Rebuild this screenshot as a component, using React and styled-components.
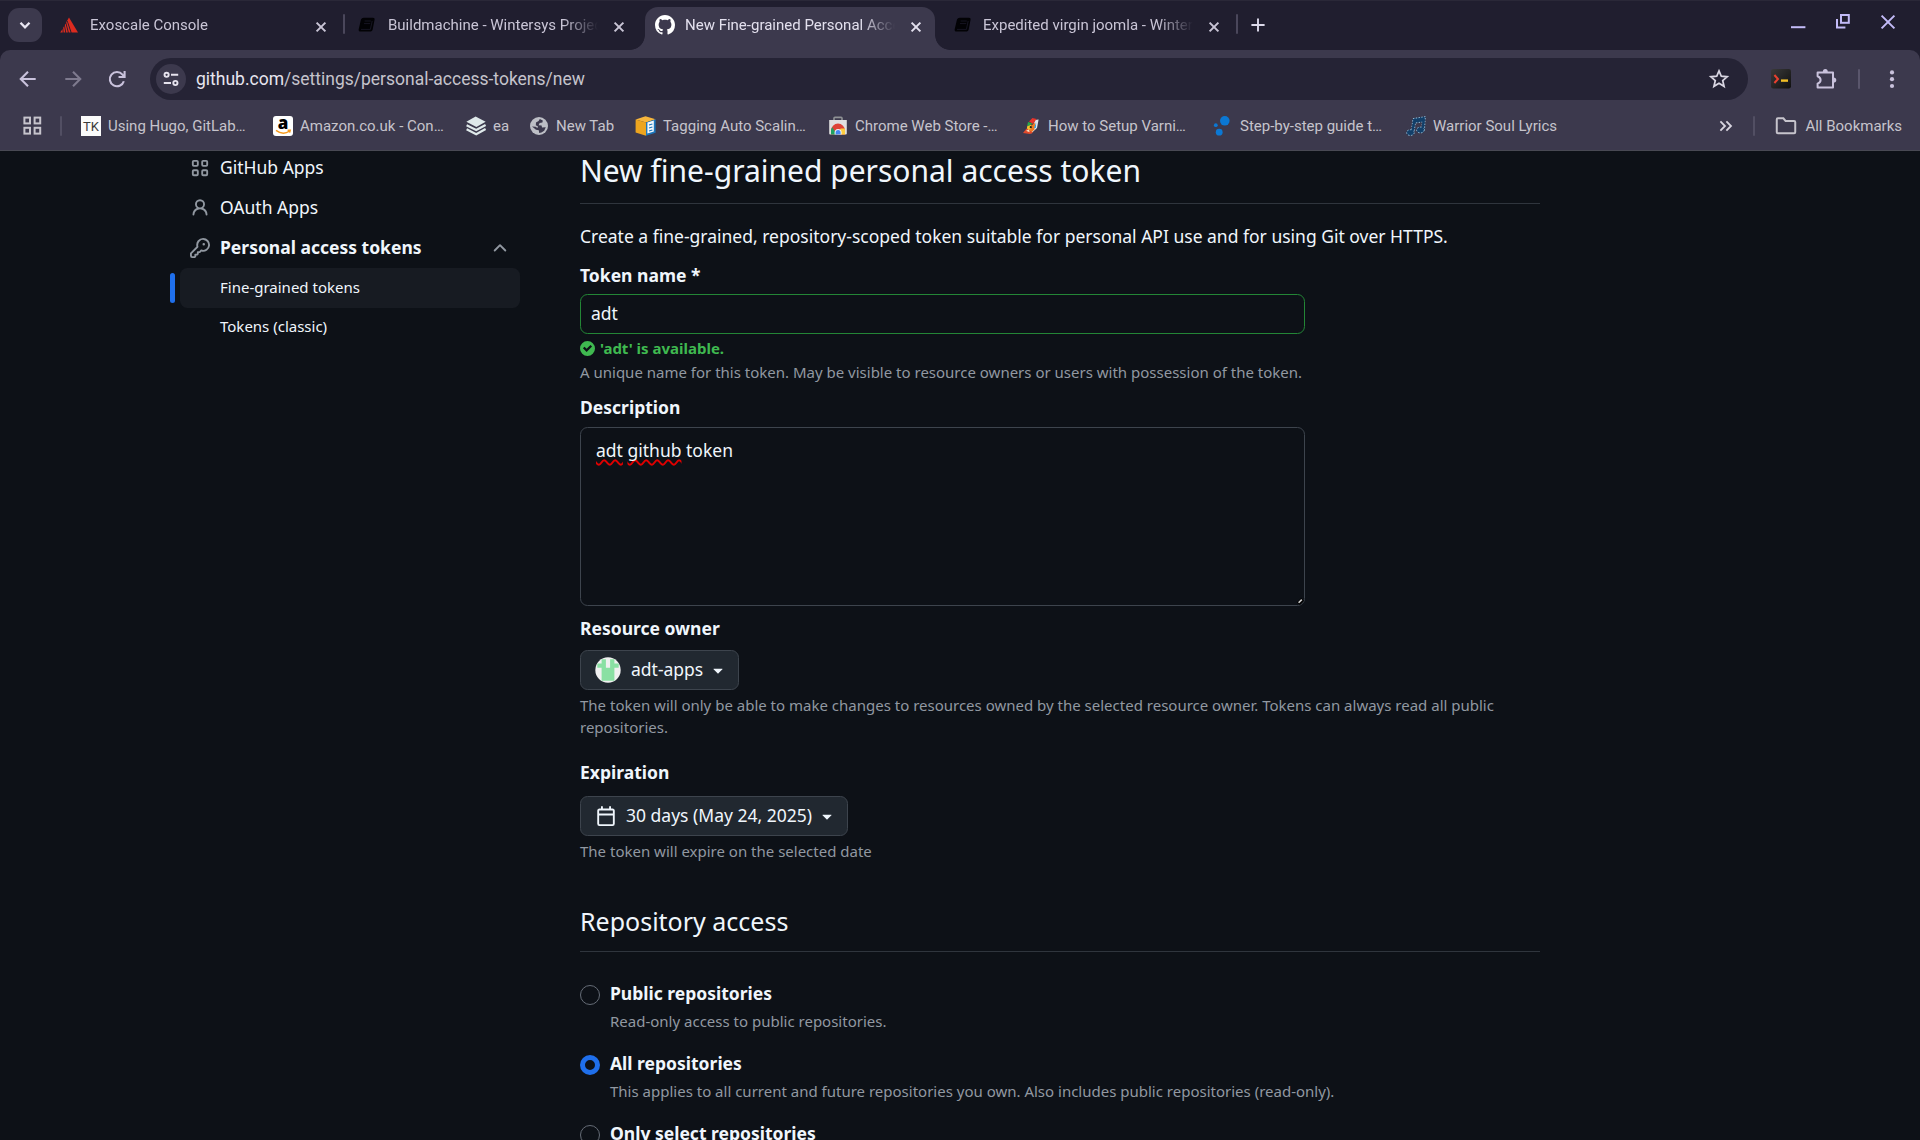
import React from "react";
import styled, { createGlobalStyle, css } from "styled-components";

const color = {
  strip: "#201e2f",
  toolbar: "#3c394d",
  omnibox: "#252335",
  chromeText: "#c9c5d6",
  bookmark: "#c6c4cc",
  lilac: "#c3bbf8",
  page: "#0d1117",
  text: "#f0f6fc",
  muted: "#9198a1",
  border: "#3d444d",
  blue: "#1f6feb",
  green: "#3fb950",
};

const GlobalStyle = createGlobalStyle`
  *, *::before, *::after { box-sizing: border-box; }
  html, body { margin: 0; padding: 0; background: ${color.page}; }
  body { overflow: hidden; }
`;

const Window = styled.div`
  width: 1920px;
  height: 1140px;
  display: flex;
  flex-direction: column;
  overflow: hidden;
  background: ${color.strip};
`;

/* ---------- Browser chrome ---------- */

const TabStrip = styled.header`
  display: flex;
  align-items: flex-start;
  height: 50px;
  padding: 7px 22px 0 8px;
  background: ${color.strip};
  box-shadow: inset 0 1px 0 #2a2838;
  font-family: Roboto, "Noto Sans", sans-serif;
`;

const TabSearch = styled.button`
  display: grid;
  place-items: center;
  width: 34px;
  height: 34px;
  margin: 1px 7px 0 0;
  padding: 0;
  border: 0;
  border-radius: 11px;
  background: ${color.toolbar};
  color: #e9e6f2;
`;

const Tab = styled.div`
  position: relative;
  display: flex;
  align-items: center;
  width: 290px;
  height: 43px;
  padding: 0 9px 7px 10px;
  border-radius: 13px 13px 0 0;
  color: ${color.chromeText};
  ${(p) =>
    p.$active &&
    css`
      background: ${color.toolbar};
      color: #e3e0ee;
      &::before,
      &::after {
        content: "";
        position: absolute;
        bottom: 0;
        width: 15px;
        height: 15px;
      }
      &::before {
        left: -15px;
        background: radial-gradient(circle at 0 0, transparent 14.5px, ${color.toolbar} 15.2px);
      }
      &::after {
        right: -15px;
        background: radial-gradient(circle at 100% 0, transparent 14.5px, ${color.toolbar} 15.2px);
      }
    `}
`;

const TabTitle = styled.span`
  flex: 1;
  min-width: 0;
  margin: 0 10px 0 ${(p) => (p.$nudge ? 11 : 10)}px;
  font-size: 15px;
  line-height: 20px;
  white-space: nowrap;
  mask-image: linear-gradient(to right, #000 calc(100% - 36px), transparent calc(100% - 1px));
`;

const TabClose = styled.span`
  display: grid;
  place-items: center;
  width: 20px;
  height: 20px;
  margin: 3px ${(p) => (p.$nudge ? -1 : 0)}px 0 0;
`;

const TabGap = styled.span`
  display: flex;
  justify-content: center;
  width: ${(p) => (p.$end ? 5 : 8)}px;
  padding: ${(p) => (p.$end ? "7px 0 0 3px" : "7px 0 0 2px")};
`;

const Divider = styled.span`
  flex: none;
  width: 2px;
  height: ${(p) => p.$h || 20}px;
  border-radius: 1px;
  background: ${(p) => p.$tone || "#4a475b"};
`;

const NewTab = styled.span`
  display: grid;
  place-items: center;
  width: 28px;
  height: 36px;
  margin-left: 6px;
  color: #dcd9ea;
`;

const WindowControls = styled.div`
  display: flex;
  gap: 25px;
  margin: 5px 0 0 auto;
  color: ${color.lilac};
`;

const Toolbar = styled.div`
  display: flex;
  align-items: center;
  height: 58px;
  padding: 0 18px 0 17px;
  background: ${color.toolbar};
  border-radius: 10px 10px 0 0;
  font-family: Roboto, "Noto Sans", sans-serif;
`;

const NavButtons = styled.div`
  display: flex;
  gap: 23px;
  width: 133px;
  color: #c9c2dc;
  & > svg:last-child { margin-left: -1px; }
`;

const Omnibox = styled.div`
  display: flex;
  align-items: center;
  width: 1598px;
  height: 42px;
  padding: 0 18px 0 6px;
  border-radius: 21px;
  background: ${color.omnibox};
`;

const SiteInfo = styled.span`
  display: grid;
  place-items: center;
  width: 30px;
  height: 30px;
  border-radius: 50%;
  background: ${color.toolbar};
  color: #e6e3ee;
`;

const Url = styled.span`
  flex: 1;
  margin-left: 10px;
  font-size: 17.5px;
  line-height: 24px;
  color: #c5c3cc;
  b {
    font-weight: 400;
    color: #e8e5ef;
  }
`;

const Extensions = styled.div`
  display: flex;
  align-items: center;
  flex: 1;
  margin-left: 23px;
  color: #c9c2dc;
  & > svg:nth-child(2) { margin-left: 24px; }
  & > svg:last-child { margin-left: auto; }
  & > span { margin-left: 21px; }
`;

const BookmarkBar = styled.nav`
  display: flex;
  align-items: center;
  height: 43px;
  padding: 0 18px 7px 23px;
  background: ${color.toolbar};
  border-bottom: 1px solid #484953;
  font-family: Roboto, "Noto Sans", sans-serif;
  font-size: 15px;
  line-height: 20px;
  color: ${color.bookmark};
`;

const AppsGrid = styled.span`
  display: flex;
  width: 37px;
`;

const BookmarkList = styled.div`
  display: flex;
  flex: 1;
  margin-left: 19px;
`;

const Bookmark = styled.span`
  display: flex;
  align-items: center;
  gap: 7px;
  width: ${(p) => p.$w}px;
  white-space: nowrap;
`;

const BookmarkEnd = styled.div`
  display: flex;
  align-items: center;
  & > svg { margin-right: 17px; }
`;

const AllBookmarks = styled.span`
  display: flex;
  align-items: center;
  gap: 8px;
  margin-left: 20px;
`;

/* ---------- Page ---------- */

const Page = styled.div`
  flex: 1;
  display: flex;
  align-items: flex-start;
  padding-left: 170px;
  overflow: hidden;
  background: ${color.page};
  color: ${color.text};
  font-family: "Noto Sans", sans-serif;
  font-size: 17.5px;
  line-height: 26.25px;
`;

const Sidebar = styled.nav`
  width: 350px;
  margin-right: 60px;
  margin-top: -3px;
`;

const SideItem = styled.div`
  display: flex;
  align-items: center;
  gap: 10px;
  height: 40px;
  padding: 0 10px 0 20px;
  font-weight: ${(p) => (p.$bold ? 700 : 400)};
  color: ${color.muted};
  & > span {
    flex: 1;
    padding-bottom: 2px;
    color: ${color.text};
  }
`;

const SubRow = styled.div`
  display: flex;
  align-items: center;
  height: 40px;
  margin-top: ${(p) => (p.$current ? 0 : -1)}px;
`;

const CurrentBar = styled.span`
  width: 5px;
  height: 30px;
  margin-right: 5px;
  border-radius: 7.5px;
  background: ${(p) => (p.$on ? color.blue : "transparent")};
`;

const SubItem = styled.span`
  flex: 1;
  height: 40px;
  padding: 8px 40px;
  border-radius: 7.5px;
  background: ${(p) => (p.$current ? "#171b22" : "transparent")};
  font-size: 15px;
  line-height: 22px;
`;

const Main = styled.main`
  width: 960px;
  margin-top: -3px;
`;

const Heading = styled.h2`
  margin: ${(p) => p.$top || 0}px 0 0;
  padding-bottom: ${(p) => p.$gap || 10}px;
  border-bottom: 1px solid #2f353d;
  font-size: ${(p) => p.$size}px;
  line-height: 1.5;
  font-weight: 400;
`;

const Intro = styled.p`
  margin: 19px 0 0;
  height: 27px;
`;

const Label = styled.div`
  margin-top: ${(p) => p.$top}px;
  height: 26px;
  font-weight: 700;
`;

const Help = styled.p`
  margin: ${(p) => p.$top}px 0 0;
  font-size: 15px;
  line-height: 22.5px;
  color: ${color.muted};
`;

const Field = styled.input`
  display: block;
  width: 725px;
  height: 40px;
  margin: 6px 0 0;
  padding: 0 10px 2px;
  border: 1px solid #238636;
  border-radius: 7.5px;
  outline: 0;
  background: ${color.page};
  color: ${color.text};
  font: inherit;
`;

const Available = styled.div`
  display: flex;
  align-items: center;
  gap: 5px;
  height: 23px;
  margin-top: 3px;
  font-size: 15px;
  line-height: 22.5px;
  font-weight: 700;
  color: ${color.green};
`;

const DescriptionBox = styled.div`
  display: flex;
  align-items: flex-start;
  justify-content: space-between;
  width: 725px;
  height: 179px;
  margin-top: 7px;
  padding: 9px 0 0 15px;
  border: 1px solid ${color.border};
  border-radius: 7.5px;
  & > svg { align-self: flex-end; }
`;

const Misspelled = styled.span`
  text-decoration: underline wavy #e00000 1.5px;
  text-underline-offset: 1.5px;
  text-decoration-skip-ink: none;
`;

const SelectButton = styled.button`
  display: flex;
  align-items: center;
  width: ${(p) => p.$w}px;
  height: 40px;
  margin: ${(p) => p.$top}px 0 0;
  padding: 0 10px 0 ${(p) => p.$pad || 15}px;
  border: 1px solid ${color.border};
  border-radius: 7.5px;
  background: #212830;
  color: ${color.text};
  font: inherit;
  white-space: nowrap;
  & > span {
    margin: 0 5px 0 10px;
    padding-bottom: 2px;
  }
`;

const RadioRow = styled.div`
  display: flex;
  gap: 10px;
  height: 70px;
`;

const Radio = styled.span`
  flex: none;
  width: 20px;
  height: 20px;
  margin-top: 5px;
  border-radius: 50%;
  border: ${(p) => (p.$on ? `5px solid ${color.blue}` : "1px solid #656c76")};
`;

const RadioText = styled.div`
  display: flex;
  flex-direction: column;
  b {
    height: 26px;
    font-weight: 700;
  }
`;

const RadioList = styled.div`
  margin-top: 28px;
`;

/* ---------- Icons ---------- */

const octicons = {
  person:
    "M10.561 8.073a6.005 6.005 0 0 1 3.432 5.142.75.75 0 1 1-1.498.07 4.5 4.5 0 0 0-8.99 0 .75.75 0 0 1-1.498-.07 6.004 6.004 0 0 1 3.431-5.142 3.999 3.999 0 1 1 5.123 0ZM10.5 5a2.5 2.5 0 1 0-5 0 2.5 2.5 0 0 0 5 0Z",
  key: "M10.5 0a5.499 5.499 0 1 1-1.288 10.848l-.932.932a.749.749 0 0 1-.53.22H7v.75a.749.749 0 0 1-.22.53l-.5.5a.749.749 0 0 1-.53.22H5v.75a.749.749 0 0 1-.22.53l-.5.5a.749.749 0 0 1-.53.22h-2A1.75 1.75 0 0 1 0 14.25v-2c0-.199.079-.389.22-.53l4.932-4.932A5.5 5.5 0 0 1 10.5 0Zm-4 5.5c-.001.431.069.86.205 1.269a.75.75 0 0 1-.181.768L1.5 12.56v1.69c0 .138.112.25.25.25h1.69l.06-.06v-1.19a.75.75 0 0 1 .75-.75h1.19l.06-.06v-1.19a.75.75 0 0 1 .75-.75h1.19l1.023-1.025a.75.75 0 0 1 .768-.18A4 4 0 1 0 6.5 5.5ZM11 6a1 1 0 1 1 0-2 1 1 0 0 1 0 2Z",
  calendar:
    "M4.75 0a.75.75 0 0 1 .75.75V2h5V.75a.75.75 0 0 1 1.5 0V2h1.25c.966 0 1.75.784 1.75 1.75v10.5A1.75 1.75 0 0 1 13.25 16H2.75A1.75 1.75 0 0 1 1 14.25V3.75C1 2.784 1.784 2 2.75 2H4V.75A.75.75 0 0 1 4.75 0ZM2.5 7.5v6.75c0 .138.112.25.25.25h10.5a.25.25 0 0 0 .25-.25V7.5Zm10.75-4H2.75a.25.25 0 0 0-.25.25V6h11V3.75a.25.25 0 0 0-.25-.25Z",
  triangle:
    "m4.427 7.427 3.396 3.396a.25.25 0 0 0 .354 0l3.396-3.396A.25.25 0 0 0 11.396 7H4.604a.25.25 0 0 0-.177.427Z",
  chevronUp:
    "M3.22 10.53a.749.749 0 0 1 0-1.06l4.25-4.25a.749.749 0 0 1 1.06 0l4.25 4.25a.749.749 0 1 1-1.06 1.06L8 6.811 4.28 10.53a.749.749 0 0 1-1.06 0Z",
  mark: "M8 0c4.42 0 8 3.58 8 8a8.013 8.013 0 0 1-5.45 7.59c-.4.08-.55-.17-.55-.38 0-.27.01-1.13.01-2.2 0-.75-.25-1.23-.54-1.48 1.78-.2 3.65-.88 3.65-3.95 0-.88-.31-1.59-.82-2.15.08-.2.36-1.02-.08-2.12 0 0-.67-.22-2.2.82-.64-.18-1.32-.27-2-.27-.68 0-1.36.09-2 .27-1.53-1.03-2.2-.82-2.2-.82-.44 1.1-.16 1.92-.08 2.12-.51.56-.82 1.28-.82 2.15 0 3.06 1.86 3.75 3.64 3.95-.23.2-.44.55-.51 1.07-.46.21-1.61.55-2.33-.66-.15-.24-.6-.83-1.23-.82-.67.01-.27.38.01.53.34.19.73.9.82 1.13.16.45.68 1.31 2.69.94 0 .67.01 1.3.01 1.49 0 .21-.15.45-.55.38A7.995 7.995 0 0 1 0 8c0-4.42 3.58-8 8-8Z",
};

const Svg = styled.svg`
  display: block;
  flex: none;
  overflow: visible;
`;

const Octicon = ({ name, fill = "currentColor" }) => (
  <Svg width="20" height="20" viewBox="0 0 16 16" fill={fill}>
    <path d={octicons[name]} />
  </Svg>
);

const Line = ({ size = 20, w = 2, children, ...rest }) => (
  <Svg width={size} height={size} viewBox="0 0 20 20" fill="none" stroke="currentColor" strokeWidth={w} {...rest}>
    {children}
  </Svg>
);

const AppsOcticon = () => (
  <Svg width="20" height="20" viewBox="0 0 16 16" fill="none" stroke="currentColor" strokeWidth="1.5">
    <rect x="2.25" y="2.25" width="4" height="4" rx="0.8" />
    <rect x="9.75" y="2.25" width="4" height="4" rx="0.8" />
    <rect x="2.25" y="9.75" width="4" height="4" rx="0.8" />
    <rect x="9.75" y="9.75" width="4" height="4" rx="0.8" />
  </Svg>
);

const ExoscaleIcon = () => (
  <Svg width="20" height="20" viewBox="0 0 20 20">
    <path d="M10 2.5 19 17.6H12.6L8.4 5.2Z" fill="#dc2b1f" />
    <path d="M7.9 6 11.6 17.6H9.8L7.2 7.4ZM6.6 8.6 8.9 17.6H7.2L5.8 10ZM5.2 11 6.3 17.6H4.6L4.2 12.8ZM3.5 14 3.7 17.6H1.2Z" fill="#dc2b1f" />
  </Svg>
);

const BookIcon = () => (
  <Svg width="20" height="20" viewBox="0 0 20 20">
    <path d="M6.8 2.8H16Q18 2.8 17.6 4.6L15.6 14.8Q15.2 16.6 13.6 16.6H3.8Q1.2 16.4 1.7 14.2L4 4.6Q4.6 2.8 6.8 2.8Z" fill="#020205" />
    <path d="M7.6 6H13.8M7 8.6H13.2M4 14.4H13.4L15.2 6" stroke="#1b1929" strokeWidth="0.8" fill="none" />
  </Svg>
);

const CloseIcon = () => (
  <Line size={20} w={2}>
    <path d="M5.6 5.6 14.4 14.4M14.4 5.6 5.6 14.4" />
  </Line>
);

const TuneIcon = () => (
  <Line size={20} w={1.9}>
    <circle cx="5.6" cy="5.8" r="2.1" />
    <path d="M10 5.8H17.2M2.8 14H10" />
    <circle cx="14.4" cy="14" r="2.1" />
  </Line>
);

const PuzzleIcon = () => (
  <Svg width="22" height="22" viewBox="0 0 22 22">
    <path
      d="M2.6 4.4H18V19.4H2.6V15.6Q5.6 14.4 5.6 11.9T2.6 8.2Z"
      fill="none"
      stroke="currentColor"
      strokeWidth="2"
      strokeLinejoin="round"
    />
    <path d="M7.8 4A2.5 2.9 0 0 1 12.8 4ZM18.4 9.4A2.9 2.6 0 0 1 18.4 14.6Z" fill="currentColor" />
  </Svg>
);

const TerminalIcon = () => (
  <Svg width="20" height="20" viewBox="0 0 20 20">
    <defs>
      <linearGradient id="term" x1="0" y1="0" x2="1" y2="1">
        <stop offset="0" stopColor="#3a3a3a" />
        <stop offset="1" stopColor="#101010" />
      </linearGradient>
    </defs>
    <rect width="20" height="19.5" rx="2.2" fill="url(#term)" />
    <path d="M3.4 6 7 10 3.4 14" fill="none" stroke="#e8402f" strokeWidth="2" />
    <rect x="10" y="10.4" width="7" height="2.4" fill="#f2bf26" />
  </Svg>
);

const TkIcon = () => (
  <Svg width="20" height="20" viewBox="0 0 20 20">
    <rect width="20" height="20" fill="#fbfbfb" />
    <text x="10" y="14.8" textAnchor="middle" fontFamily="Roboto, sans-serif" fontSize="13" fill="#3a3a3a">
      TK
    </text>
  </Svg>
);

const AmazonIcon = () => (
  <Svg width="20" height="20" viewBox="0 0 20 20">
    <rect width="20" height="20" rx="3" fill="#fff" />
    <text x="10" y="13.2" textAnchor="middle" fontFamily="Open Sans, sans-serif" fontWeight="800" fontSize="17" fill="#000">
      a
    </text>
    <path d="M3 14.4Q10 19.6 16.6 15M14.6 14.2 17.2 14.2 16.6 16.6" fill="none" stroke="#f79a1b" strokeWidth="1.5" />
  </Svg>
);

const LayersIcon = () => (
  <Svg width="20" height="20" viewBox="0 0 20 20">
    <path d="M9.6.4 19.6 5.8 10.4 11 .4 5.8Z" fill="#dfe9ea" />
    <path d="M.6 9.2 10.2 14 19.6 9M.6 13.2 10.2 18.2 19.6 13" fill="none" stroke="#dfe9ea" strokeWidth="2.2" />
  </Svg>
);

const GlobeIcon = () => (
  <Svg width="20" height="20" viewBox="0 0 20 20">
    <circle cx="10" cy="10" r="9" fill="#bdbfc6" />
    <path
      d="M10.8 3 13.8 4.4 13.4 6.6 10.6 7 9.6 9.2 12.6 9.4 13 11.6 16.8 11.2 15.2 14.8 12.4 16.6 10.2 17 9.8 14.2 7 13.8 3 10.4 6.6 10.8 8.4 12 9 10.4 6.8 9.2 7 6.4 9.6 5Z"
      fill={color.toolbar}
    />
  </Svg>
);

const BoxIcon = () => (
  <Svg width="21" height="20" viewBox="0 0 21 20">
    <path d="M10.5.2 20.6 3.2 11 6.4.6 3.4Z" fill="#f7b63c" />
    <path d="M.6 3.4 11 6.4V19.8L.6 16.6Z" fill="#eda51f" />
    <path d="M11 6.4 20.6 3.2V16.8L11 19.8Z" fill="#1c76bb" />
    <path d="M12.4 6.6 18.8 4.6V15.6L12.4 17.6Z" fill="#f4f9fd" />
    <path d="M14 9 17.4 8M14 12 17.4 11M14 15 17.4 14" stroke="#1c76bb" strokeWidth="1.3" />
  </Svg>
);

const WebStoreIcon = () => (
  <Svg width="20" height="20" viewBox="0 0 20 20">
    <path d="M6 5V2.2Q6 1.4 7 1.4H13Q14 1.4 14 2.2V5" fill="none" stroke="#8f9295" strokeWidth="1.6" />
    <path d="M1.2 4H18.8V17.6Q18.8 18.6 17.8 18.6H2.2Q1.2 18.6 1.2 17.6Z" fill="#e0e0e0" />
    <path d="M3 18.6V14.6A7 7 0 0 1 17 14.6V18.6Z" fill="#dd4437" />
    <path d="M3 18.6V14.6A7 7 0 0 1 4.2 11.2L9 18.6Z" fill="#1ea362" />
    <path d="M12.6 12.6H16.8Q17.2 14 17 18.6H10Z" fill="#fdcd3f" />
    <path d="M6.6 18.6V16.6A3.5 3.5 0 0 1 13.6 16.6V18.6Z" fill="#f4f4f4" />
    <path d="M7.6 18.6V16.6A2.5 2.5 0 0 1 12.6 16.6V18.6Z" fill="#4587f3" />
  </Svg>
);

const ParrotIcon = () => (
  <Svg width="20" height="20" viewBox="0 0 20 20">
    <path d="M14 4 17.6 3.4 16 12 10 17.4 12.4 9Z" fill="#dfe7ee" />
    <path d="M8 5.6 11.4 2 15.6 3 12 8Z" fill="#e6352b" />
    <path d="M7 6 11.6 7.6 6 10.8Z" fill="#2ba84a" />
    <path d="M10.4 9.4 14.4 6.4 13.4 13.4 10.4 16.4 6.6 13Z" fill="#ef7a22" />
    <path d="M6 10.4 10.4 8.6 10 13 6.2 14Z" fill="#f6c12c" />
    <path d="M2 17 5.6 12.6 12 16.8 9 18Z" fill="#e24a2c" />
    <path d="M5 14.8 8 13.4 8.6 16.2Z" fill="#fae9c6" />
    <path d="M13 12 15.2 6.6 14.8 12Z" fill="#2c9ee0" />
    <circle cx="9.8" cy="11.2" r="1.1" fill="#222" />
  </Svg>
);

const DotsIcon = () => (
  <Svg width="20" height="20" viewBox="0 0 20 20" fill="#0b78d4">
    <circle cx="11.8" cy="4.8" r="4.8" />
    <circle cx="2.8" cy="9.2" r="1.9" />
    <circle cx="6.2" cy="16.2" r="3.4" />
  </Svg>
);

const NotesIcon = () => (
  <Svg width="20" height="20" viewBox="0 0 20 20">
    <g fill="#123f69" stroke="#9cc3dd" strokeWidth="0.9">
      <path d="M7 2.6 19.4.6 18.4 14H15.6L16.4 6 9.4 7 8 16.4H5.2Z" strokeDasharray="1.4 1.4" />
      <ellipse cx="4.4" cy="16.6" rx="3.8" ry="2.9" strokeDasharray="1.6 1.4" />
      <ellipse cx="14.4" cy="14" rx="3.8" ry="2.9" strokeDasharray="1.6 1.4" />
    </g>
    <path d="M6.2 16 8.4 4.4M16.4 13.6 17.8 3" stroke="#123f69" strokeWidth="2" />
  </Svg>
);

const Avatar = () => (
  <Svg width="26" height="26" viewBox="0 0 26 26">
    <defs>
      <clipPath id="avatar">
        <circle cx="13" cy="13" r="12.7" />
      </clipPath>
    </defs>
    <g clipPath="url(#avatar)">
      <rect width="26" height="26" fill="#f0f0f0" />
      <path d="M6.6 2.3H10.9V10.8H15.1V2.3H19.4V6.6H23.7V10.8H19.4V23.7H6.6V10.8H2.3V6.6H6.6Z" fill="#8ae0a3" />
    </g>
  </Svg>
);

/* ---------- Content ---------- */

const tabs = [
  { title: "Exoscale Console", icon: <ExoscaleIcon />, divider: true, nudge: true },
  { title: "Buildmachine - Wintersys Projec", icon: <BookIcon />, nudge: true },
  { title: "New Fine-grained Personal Acce", icon: <Octicon name="mark" fill="#fff" />, active: true },
  { title: "Expedited virgin joomla - Winter", icon: <BookIcon /> },
];

const bookmarks = [
  { label: "Using Hugo, GitLab…", icon: <TkIcon />, w: 192 },
  { label: "Amazon.co.uk - Con…", icon: <AmazonIcon />, w: 193 },
  { label: "ea", icon: <LayersIcon />, w: 63 },
  { label: "New Tab", icon: <GlobeIcon />, w: 106 },
  { label: "Tagging Auto Scalin…", icon: <BoxIcon />, w: 193 },
  { label: "Chrome Web Store -…", icon: <WebStoreIcon />, w: 193 },
  { label: "How to Setup Varni…", icon: <ParrotIcon />, w: 192 },
  { label: "Step-by-step guide t…", icon: <DotsIcon />, w: 193 },
  { label: "Warrior Soul Lyrics", icon: <NotesIcon />, w: 180 },
];

const radios = [
  { title: "Public repositories", desc: "Read-only access to public repositories." },
  {
    title: "All repositories",
    desc: "This applies to all current and future repositories you own. Also includes public repositories (read-only).",
    on: true,
  },
  { title: "Only select repositories" },
];

const BrowserChrome = () => (
  <>
    <TabStrip>
      <TabSearch>
        <Line size={18} w={2.6}>
          <path d="M5 7.5 10 12.5 15 7.5" />
        </Line>
      </TabSearch>
      {tabs.map((t, i) => (
        <React.Fragment key={t.title}>
          <Tab $active={t.active}>
            {t.icon}
            <TabTitle $nudge={t.nudge}>{t.title}</TabTitle>
            <TabClose $nudge={t.nudge}>
              <CloseIcon />
            </TabClose>
          </Tab>
          <TabGap $end={i === 3}>{(t.divider || i === 3) && <Divider />}</TabGap>
        </React.Fragment>
      ))}
      <NewTab>
        <Line size={20} w={1.9}>
          <path d="M10 3.4V16.6M3.4 10H16.6" />
        </Line>
      </NewTab>
      <WindowControls>
        <Line size={20} w={2}>
          <path d="M3 15.2H17.4" />
        </Line>
        <Line size={20} w={2}>
          <rect x="8" y="3" width="7.8" height="7.8" />
          <path d="M4 7V15.4H12.4" />
        </Line>
        <Line size={20} w={2}>
          <path d="M3.6 3.6 16.4 16.4M16.4 3.6 3.6 16.4" />
        </Line>
      </WindowControls>
    </TabStrip>
    <Toolbar>
      <NavButtons>
        <Line size={22} w={1.9}>
          <path d="M17 10H3.6M10 3.4 3.4 10 10 16.6" />
        </Line>
        <Line size={22} w={1.9} stroke="#7e7a8e">
          <path d="M3 10H16.4M10 3.4 16.6 10 10 16.6" />
        </Line>
        <Line size={22} w={1.9}>
          <path d="M16.2 12A6.5 6.5 0 1 1 15 6L16.4 7.4" />
          <path d="M16.9 2.8V8.2H11.4" />
        </Line>
      </NavButtons>
      <Omnibox>
        <SiteInfo>
          <TuneIcon />
        </SiteInfo>
        <Url>
          <b>github.com</b>/settings/personal-access-tokens/new
        </Url>
        <Line size={22} w={1.6} stroke="#d9d6e2">
          <path d="M10 2.6 12.1 7.5 17.4 8 13.4 11.5 14.6 16.7 10 13.9 5.4 16.7 6.6 11.5 2.6 8 7.9 7.5Z" />
        </Line>
      </Omnibox>
      <Extensions>
        <TerminalIcon />
        <PuzzleIcon />
        <Divider $tone="#5a566c" />
        <Svg width="20" height="20" viewBox="0 0 20 20" fill="currentColor">
          <circle cx="10" cy="3.4" r="2.1" />
          <circle cx="10" cy="10.2" r="2.1" />
          <circle cx="10" cy="17" r="2.1" />
        </Svg>
      </Extensions>
    </Toolbar>
    <BookmarkBar>
      <AppsGrid>
        <Line size={20} w={2} stroke="#c6c4cc">
          <rect x="1.4" y="1.6" width="5.6" height="5.8" />
          <rect x="11.6" y="1.6" width="5.6" height="5.8" />
          <rect x="1.4" y="11.8" width="5.6" height="5.8" />
          <rect x="11.6" y="11.8" width="5.6" height="5.8" />
        </Line>
      </AppsGrid>
      <Divider $tone="#524f63" />
      <BookmarkList>
        {bookmarks.map((b) => (
          <Bookmark key={b.label} $w={b.w}>
            {b.icon}
            {b.label}
          </Bookmark>
        ))}
      </BookmarkList>
      <BookmarkEnd>
        <Line size={20} w={1.8} stroke="#d9d6e0">
          <path d="M4.4 5.4 9 10 4.4 14.6M10.4 5.4 15 10 10.4 14.6" />
        </Line>
        <Divider $tone="#524f63" />
        <AllBookmarks>
          <Line size={22} w={1.8} stroke="#c6c4cc">
            <path d="M1.6 4Q1.6 3 2.6 3H7.6L9.6 5.4H17.4Q18.4 5.4 18.4 6.4V15.6Q18.4 16.6 17.4 16.6H2.6Q1.6 16.6 1.6 15.6Z" />
          </Line>
          All Bookmarks
        </AllBookmarks>
      </BookmarkEnd>
    </BookmarkBar>
  </>
);

const SettingsNav = () => (
  <Sidebar>
    <SideItem>
      <AppsOcticon />
      <span>GitHub Apps</span>
    </SideItem>
    <SideItem>
      <Octicon name="person" />
      <span>OAuth Apps</span>
    </SideItem>
    <SideItem $bold>
      <Octicon name="key" />
      <span>Personal access tokens</span>
      <Octicon name="chevronUp" />
    </SideItem>
    <SubRow $current>
      <CurrentBar $on />
      <SubItem $current>Fine-grained tokens</SubItem>
    </SubRow>
    <SubRow>
      <CurrentBar />
      <SubItem>Tokens (classic)</SubItem>
    </SubRow>
  </Sidebar>
);

const TokenForm = () => (
  <Main>
    <Heading $size={30}>New fine-grained personal access token</Heading>
    <Intro>Create a fine-grained, repository-scoped token suitable for personal API use and for using Git over HTTPS.</Intro>

    <Label $top={12}>Token name *</Label>
    <Field defaultValue="adt" />
    <Available>
      <Svg width="15" height="15" viewBox="0 0 12 12" fill="currentColor">
        <path d="M6 0a6 6 0 1 1 0 12A6 6 0 0 1 6 0Zm-.705 8.737L9.63 4.403 8.392 3.166 5.295 6.263l-1.7-1.702L2.356 5.8l2.938 2.938Z" />
      </Svg>
      'adt' is available.
    </Available>
    <Help $top={1}>
      A unique name for this token. May be visible to resource owners or users with possession of the token.
    </Help>

    <Label $top={10.5}>Description</Label>
    <DescriptionBox>
      <span>
        <Misspelled>adt</Misspelled> <Misspelled>github</Misspelled> token
      </span>
      <Svg width="8" height="8" viewBox="0 0 8 8">
        <path d="M2.4 6.6 6.6 2.4" stroke="#000" strokeWidth="4" />
        <path d="M2.6 5.8 5.8 2.6" stroke="#d0d0d0" strokeWidth="1.6" />
      </Svg>
    </DescriptionBox>

    <Label $top={9}>Resource owner</Label>
    <SelectButton $w={159} $top={9} $pad={14}>
      <Avatar />
      <span>adt-apps</span>
      <Octicon name="triangle" />
    </SelectButton>
    <Help $top={3.5}>
      The token will only be able to make changes to resources owned by the selected resource owner. Tokens can always
      read all public repositories.
    </Help>

    <Label $top={20.5}>Expiration</Label>
    <SelectButton $w={268} $top={11}>
      <Octicon name="calendar" />
      <span>30 days (May 24, 2025)</span>
      <Octicon name="triangle" />
    </SelectButton>
    <Help $top={3.5}>The token will expire on the selected date</Help>

    <Heading $size={25} $top={40.5} $gap={11}>
      Repository access
    </Heading>
    <RadioList>
      {radios.map((r) => (
        <RadioRow key={r.title}>
          <Radio $on={r.on} />
          <RadioText>
            <b>{r.title}</b>
            {r.desc && <Help $top={4}>{r.desc}</Help>}
          </RadioText>
        </RadioRow>
      ))}
    </RadioList>
  </Main>
);

export default function App() {
  return (
    <Window>
      <GlobalStyle />
      <BrowserChrome />
      <Page>
        <SettingsNav />
        <TokenForm />
      </Page>
    </Window>
  );
}
